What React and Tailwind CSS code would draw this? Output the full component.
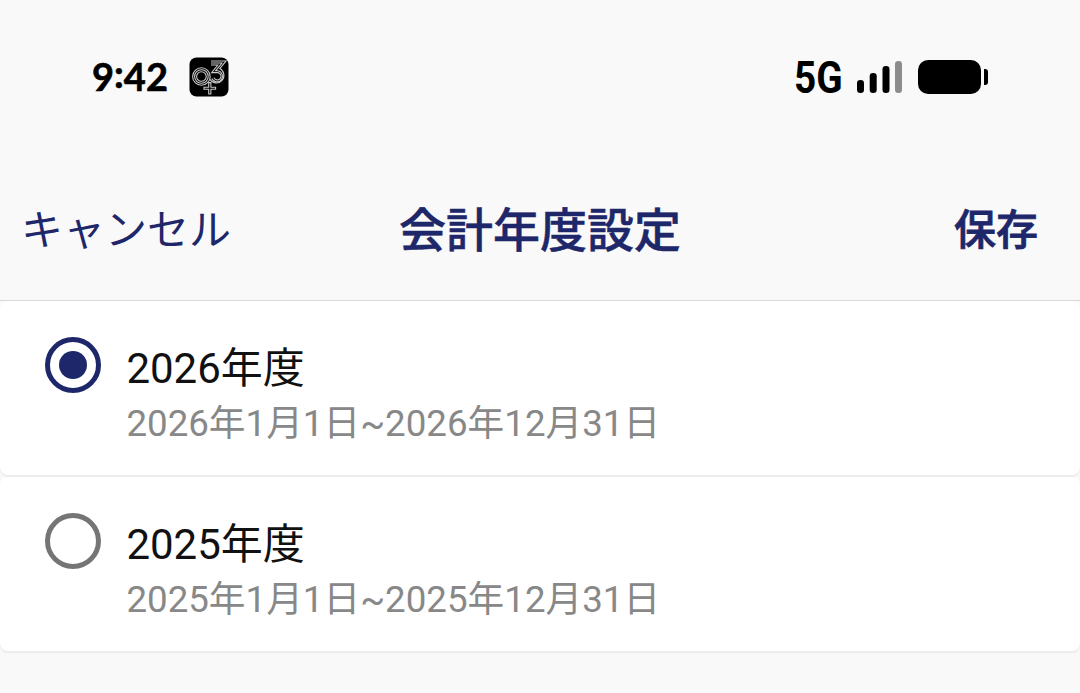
import React, { useState } from 'react';

const fiscalYears = [
    { id: 2026, label: '2026年度', period: '2026年1月1日~2026年12月31日' },
    { id: 2025, label: '2025年度', period: '2025年1月1日~2025年12月31日' }
];

function AppBadge() {
    return (
        <svg width="40" height="40" viewBox="0 0 40 40" fill="none">
            <rect x="0.5" y="0.5" width="39" height="39" rx="7" fill="#000" />
            {/* o */}
            <g stroke="#c8c8c8" strokeWidth="1.1">
                <circle cx="12.4" cy="19.5" r="8.8" />
                <circle cx="12.4" cy="19.5" r="6.8" />
                <circle cx="12.4" cy="19.5" r="4.8" />
            </g>
            {/* 3 */}
            <g stroke="#c8c8c8" strokeWidth="1.1">
                <path d="M22 4H37L30.8 11.6A7.6 7.6 0 1 1 20.8 22.3" />
                <path d="M22 6H33L26.6 13.8H29A5.6 5.6 0 1 1 22.8 21.5" />
                <path d="M22 8H28.8L22.6 15.6H29A3.7 3.7 0 1 1 24.9 20.6" />
            </g>
            {/* + */}
            <path d="M19.7 25.6h2.2v4.6h4.7v2.1h-4.7v4.7h-2.2v-4.7H15v-2.1h4.7z" fill="#000" stroke="#c8c8c8" strokeWidth="1.1" />
        </svg>
    );
}

function SignalIcon() {
    return (
        <svg width="46" height="34" viewBox="0 0 46 34">
            <rect x="0" y="20" width="7" height="13" rx="3.3" fill="#000" />
            <rect x="12.7" y="13" width="7" height="20" rx="3.3" fill="#000" />
            <rect x="25.5" y="6" width="7" height="27" rx="3.3" fill="#000" />
            <rect x="38" y="1" width="7" height="32" rx="3.3" fill="#8c8c8c" />
        </svg>
    );
}

function BatteryIcon() {
    return (
        <svg width="70" height="34" viewBox="0 0 70 34">
            <rect x="0" y="0" width="63" height="34" rx="10" fill="#000" />
            <path d="M66 9h1a3 3 0 0 1 3 3v10a3 3 0 0 1-3 3h-1z" fill="#000" />
        </svg>
    );
}

function StatusBar() {
    return (
        <div className="flex h-[154px] items-center justify-between pr-[92px] pl-[92px] text-black">
            <div className="flex items-center">
                <span className="w-[97px] pb-[3px] font-['Lato',sans-serif] text-[38px] leading-none font-bold [-webkit-text-stroke:0.6px_black]">
                    9<span className="inline-block -translate-y-[3px]">:</span>42
                </span>
                <AppBadge />
            </div>
            <div className="flex items-center">
                <span className="w-[63px] origin-left scale-x-[0.86] font-['Roboto',sans-serif] text-[45px] leading-none font-bold">5G</span>
                <SignalIcon />
                <span className="ml-[15px]"><BatteryIcon /></span>
            </div>
        </div>
    );
}

function Radio({ checked }) {
    return (
        <span
            className={`flex size-[56px] shrink-0 items-center justify-center rounded-full border-[5px] ${
                checked ? 'border-[#1d2769]' : 'border-[#757575]'
            }`}
        >
            {checked && <span className="size-[28px] rounded-full bg-[#1d2769]"></span>}
        </span>
    );
}

export default function App() {
    const [selected, setSelected] = useState(2026);

    return (
        <div className="h-[693px] w-full overflow-hidden bg-[#f9f9f9] font-['Roboto','Noto_Sans_CJK_JP',sans-serif]">
            <StatusBar />

            <header className="grid h-[147px] grid-cols-[1fr_auto_1fr] items-center border-b border-[#d9d9d9] pt-[7px] text-[#1d2769]">
                <button className="justify-self-start pl-[21px] text-[42px] leading-[60px]">キャンセル</button>
                <h1 className="text-[47px] leading-[60px] font-medium [-webkit-text-stroke:0.5px_#1d2769]">会計年度設定</h1>
                <button className="justify-self-end pr-[42px] text-[42px] leading-[60px] font-medium [-webkit-text-stroke:0.8px_#1d2769]">保存</button>
            </header>

            <ul className="flex flex-col gap-[2px]">
                {fiscalYears.map(year => (
                    <li
                        key={year.id}
                        onClick={() => setSelected(year.id)}
                        className="flex h-[174px] gap-[25px] rounded-[8px] bg-white pt-[36px] pl-[45.4px] shadow-[0_2px_1px_#ececec]"
                    >
                        <Radio checked={selected === year.id} />
                        <div className="pt-[2px]">
                            <p className="text-[42px] leading-[60px] text-[#111111]">{year.label}</p>
                            <p className="text-[36.7px] leading-[50px] text-[#888888]">{year.period}</p>
                        </div>
                    </li>
                ))}
            </ul>
        </div>
    );
}
